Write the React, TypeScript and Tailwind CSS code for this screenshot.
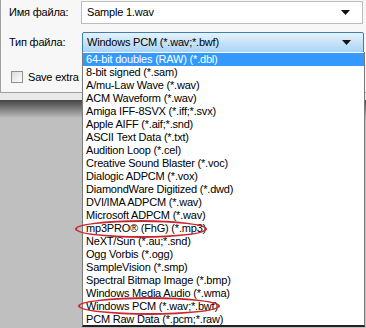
const items = [
  "64-bit doubles (RAW) (*.dbl)",
  "8-bit signed (*.sam)",
  "A/mu-Law Wave (*.wav)",
  "ACM Waveform (*.wav)",
  "Amiga IFF-8SVX (*.iff;*.svx)",
  "Apple AIFF (*.aif;*.snd)",
  "ASCII Text Data (*.txt)",
  "Audition Loop (*.cel)",
  "Creative Sound Blaster (*.voc)",
  "Dialogic ADPCM (*.vox)",
  "DiamondWare Digitized (*.dwd)",
  "DVI/IMA ADPCM (*.wav)",
  "Microsoft ADPCM (*.wav)",
  "mp3PRO® (FhG) (*.mp3)",
  "NeXT/Sun (*.au;*.snd)",
  "Ogg Vorbis (*.ogg)",
  "SampleVision (*.smp)",
  "Spectral Bitmap Image (*.bmp)",
  "Windows Media Audio (*.wma)",
  "Windows PCM (*.wav;*.bwf)",
  "PCM Raw Data (*.pcm;*.raw)",
];

function Arrow() {
  return (
    <svg width="9" height="5" viewBox="0 0 9 5">
      <path d="M0 0h9L4.5 5z" fill="#111" />
    </svg>
  );
}

export default function App() {
  return (
    <div
      className="relative w-[366px] h-[328px] overflow-hidden bg-[#bfbfbf] text-[11px] tracking-[-0.2px] text-black"
      style={{ fontFamily: '"Liberation Sans", Arial, sans-serif' }}
    >
      <div className="h-[93px] bg-[#f7f7f7] border-b border-l border-[#a0a0a0] flex flex-col pt-[1px]">
        <div className="flex items-center h-[23px]">
          <span className="w-[80px] pl-[8px]">Имя файла:</span>
          <div className="flex-1 mr-[3px] h-[23px] bg-white border border-[#bdbdbd] flex items-center pl-[5px] pr-[12px]">
            <span className="flex-1">Sample 1.wav</span>
            <Arrow />
          </div>
        </div>
        <div className="flex items-center h-[21px] mt-[8px]">
          <span className="w-[81px] pl-[8px]">Тип файла:</span>
          <div className="flex-1 mr-[2px] h-[21px] border border-[#3c7fb1] rounded-[2px] bg-gradient-to-b from-[#e6f2fc] to-[#a9d3f5] flex items-center pl-[4px] pr-[12px]">
            <span className="flex-1">Windows PCM (*.wav;*.bwf)</span>
            <Arrow />
          </div>
        </div>
        <div className="flex items-center mt-[16px] pl-[10px] gap-[5px]">
          <div className="w-[12px] h-[12px] border border-[#8f8f8f] bg-gradient-to-br from-[#dcdcdc] to-white" />
          <span>Save extra non-audio information</span>
        </div>
      </div>
      <div className="h-[7px] bg-[#e9e9e9]" />
      <div className="h-[18px] bg-gradient-to-b from-[#444] to-[#bfbfbf]" />

      <div className="absolute left-[82px] top-[52px] w-[283px] h-[275px] bg-white border-l border-r border-[#7a7a7a] border-b-2 border-b-[#222] flex flex-col pt-[1px]">
        {items.map((t, i) => (
          <div
            key={t}
            className={`h-[13px] shrink-0 leading-[13px] pl-[3px] whitespace-nowrap ${
              i === 0 ? "bg-[#3399ff] text-white" : ""
            }`}
          >
            {t}
          </div>
        ))}
      </div>

      <div className="absolute left-[75px] top-[220px] w-[132px] h-[18px] rounded-[50%] border-2 border-[#cc2530]" />
      <div className="absolute left-[78px] top-[297px] w-[142px] h-[18px] rounded-[50%] border-2 border-[#cc2530]" />
    </div>
  );
}
